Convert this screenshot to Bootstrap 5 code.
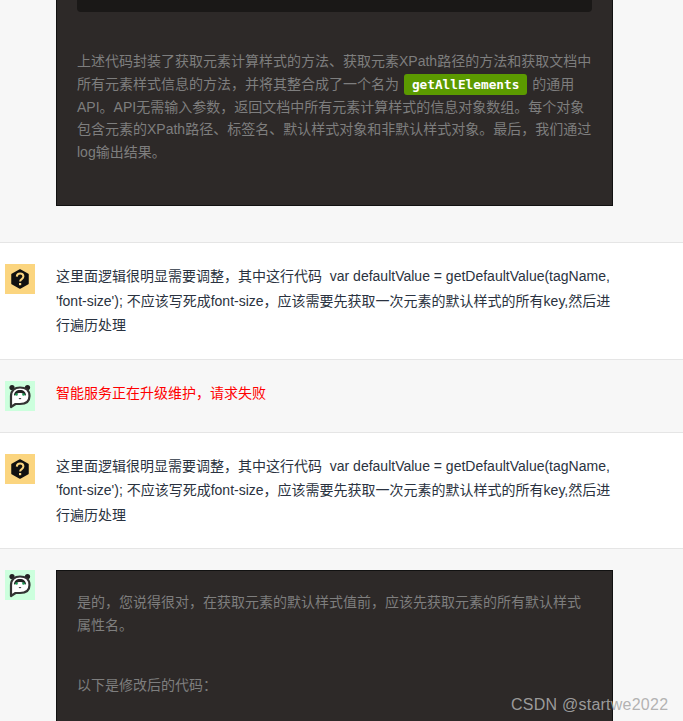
<!DOCTYPE html>
<html lang="zh">
<head>
    <meta charset="UTF-8" />
    <title>对话</title>
    <link href="https://cdn.jsdelivr.net/npm/bootstrap@5.3.2/dist/css/bootstrap.min.css" rel="stylesheet" />
    <style>
        html, body { height: 721px; overflow: hidden; }
        body { background: #f7f7f7; color: #2a3240; font-family: "Liberation Sans", "Noto Sans CJK SC", sans-serif; font-size: 14px; }
        .chat-row { padding: 21px 70px 21px 0; border-bottom: 1px solid #e5e5e5; }
        .chat-row.user-row { background: #fff; }
        .chat-row.first-row { padding-top: 0; padding-bottom: 36px; }
        .chat-row.last-row { border-bottom: 0; height: 172px; padding-bottom: 0; }
        .avatar-col { width: 56px; flex: none; padding-left: 5px; }
        .avatar-col svg { display: block; }
        .chat-text { line-height: 24.5px; margin: 0; }
        .error-text { color: #f00; }
        .dark-box { background: #2d2928; border: 1px solid #111; color: #7e7e7e; padding: 20px; line-height: 22.75px; width: 557px; flex: none; }
        .dark-box.top-box { border-top: 0; height: 206px; padding-top: 0; }
        .last-row .dark-box { border-bottom: 0; padding-bottom: 0; }
        .dark-box p { margin: 0 0 37.5px; }
        .last-row .dark-box p:last-child { margin-bottom: 0; }
        .code-end { height: 12px; background: #1a1817; border-radius: 0 0 4px 4px; margin-bottom: 38px; }
        .green-code { background: #5b9a00; color: #fff; font-family: "DejaVu Sans Mono", monospace; font-size: 12.75px; line-height: 1; font-weight: 700; padding: 3px 8px; border-radius: 3px; margin: 0 1px; }
        .watermark { position: absolute; left: 511px; top: 695px; color: rgba(170,170,170,.9); font-size: 16px; line-height: 20px; letter-spacing: .24px; }
    </style>
</head>
<body class="position-relative">

    <div class="chat-row first-row d-flex">
        <div class="avatar-col"></div>
        <div class="dark-box top-box">
            <div class="code-end"></div>
            <p>上述代码封装了获取元素计算样式的方法、获取元素XPath路径的方法和获取文档中所有元素样式信息的方法，并将其整合成了一个名为 <code class="green-code">getAllElements</code> 的通用API。API无需输入参数，返回文档中所有元素计算样式的信息对象数组。每个对象包含元素的XPath路径、标签名、默认样式对象和非默认样式对象。最后，我们通过log输出结果。</p>
        </div>
    </div>

    <div class="chat-row user-row d-flex">
        <div class="avatar-col">
            <svg width="30" height="30" viewBox="0 0 30 30">
                <rect width="30" height="30" fill="#fbd57f"/>
                <path d="M15 6 23 10.500v9L15 24 7 19.500v-9Z" fill="#111" stroke="#111" stroke-width="1.500" stroke-linejoin="round"/>
                <path d="M11.800 12.600c.2-4.200 6.600-4.200 6.600 0 0 2.600-3.300 2.400-3.300 5" fill="none" stroke="#fbd57f" stroke-width="2"/>
                <rect x="14" y="19" width="2.200" height="2.200" fill="#fbd57f"/>
            </svg>
        </div>
        <p class="chat-text">这里面逻辑很明显需要调整，其中这行代码&nbsp; var defaultValue = getDefaultValue(tagName, 'font-size'); 不应该写死成font-size，应该需要先获取一次元素的默认样式的所有key,然后进行遍历处理</p>
    </div>

    <div class="chat-row d-flex">
        <div class="avatar-col">
            <svg width="30" height="30" viewBox="0 0 30 30">
                <rect width="30" height="30" fill="#ccffdd"/>
                <circle cx="7" cy="6.500" r="2.600" fill="#222"/>
                <circle cx="22.500" cy="6.500" r="2.600" fill="#222"/>
                <path d="M6 26V15C6 9.500 9.500 6.500 15 6.500S24.500 9.500 24.500 15 20.500 23 15 23H10.500Z" fill="#fff" stroke="#333" stroke-width="2.200" stroke-linejoin="round"/>
                <path d="M9 14.500C9 11 11.500 9 15 9s6 2 6 5.500c-1.500 0-2.500-1.500-3.500-2-1.500-.6-3.500-.6-5 0-1 .5-2 2-3.500 2Z" fill="#222"/>
                <circle cx="11.500" cy="13.500" r="1.300" fill="#1c9a55"/>
                <circle cx="18.500" cy="13.500" r="1.300" fill="#1c9a55"/>
                <path d="M13.500 17h3L15 18.500Z" fill="#333"/>
            </svg>
        </div>
        <p class="chat-text error-text">智能服务正在升级维护，请求失败</p>
    </div>

    <div class="chat-row user-row d-flex">
        <div class="avatar-col">
            <svg width="30" height="30" viewBox="0 0 30 30">
                <rect width="30" height="30" fill="#fbd57f"/>
                <path d="M15 6 23 10.500v9L15 24 7 19.500v-9Z" fill="#111" stroke="#111" stroke-width="1.500" stroke-linejoin="round"/>
                <path d="M11.800 12.600c.2-4.200 6.600-4.200 6.600 0 0 2.600-3.300 2.400-3.300 5" fill="none" stroke="#fbd57f" stroke-width="2"/>
                <rect x="14" y="19" width="2.200" height="2.200" fill="#fbd57f"/>
            </svg>
        </div>
        <p class="chat-text">这里面逻辑很明显需要调整，其中这行代码&nbsp; var defaultValue = getDefaultValue(tagName, 'font-size'); 不应该写死成font-size，应该需要先获取一次元素的默认样式的所有key,然后进行遍历处理</p>
    </div>

    <div class="chat-row last-row d-flex">
        <div class="avatar-col">
            <svg width="30" height="30" viewBox="0 0 30 30">
                <rect width="30" height="30" fill="#ccffdd"/>
                <circle cx="7" cy="6.500" r="2.600" fill="#222"/>
                <circle cx="22.500" cy="6.500" r="2.600" fill="#222"/>
                <path d="M6 26V15C6 9.500 9.500 6.500 15 6.500S24.500 9.500 24.500 15 20.500 23 15 23H10.500Z" fill="#fff" stroke="#333" stroke-width="2.200" stroke-linejoin="round"/>
                <path d="M9 14.500C9 11 11.500 9 15 9s6 2 6 5.500c-1.500 0-2.500-1.500-3.500-2-1.500-.6-3.500-.6-5 0-1 .5-2 2-3.500 2Z" fill="#222"/>
                <circle cx="11.500" cy="13.500" r="1.300" fill="#1c9a55"/>
                <circle cx="18.500" cy="13.500" r="1.300" fill="#1c9a55"/>
                <path d="M13.500 17h3L15 18.500Z" fill="#333"/>
            </svg>
        </div>
        <div class="dark-box">
            <p>是的，您说得很对，在获取元素的默认样式值前，应该先获取元素的所有默认样式属性名。</p>
            <p>以下是修改后的代码：</p>
        </div>
    </div>

    <div class="watermark">CSDN @startwe2022</div>

</body>
</html>
